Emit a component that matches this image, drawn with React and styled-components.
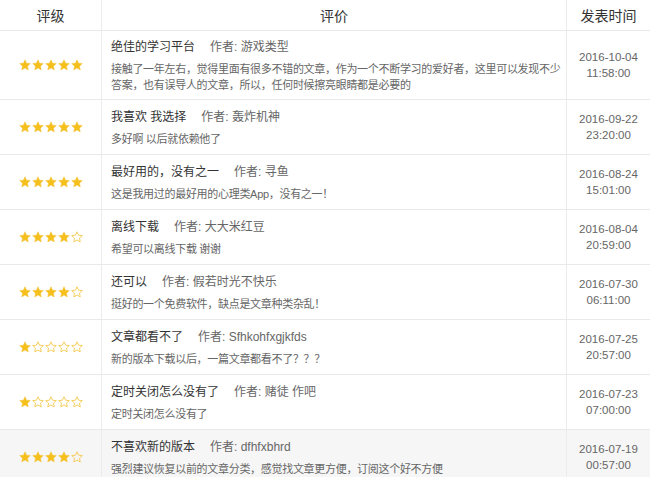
import React from "react";
import styled, { createGlobalStyle } from "styled-components";

const GlobalStyle = createGlobalStyle`
	html, body {
		margin: 0;
		padding: 0;
		background: #fff;
		overflow: hidden;
	}
	body {
		font-family: "Liberation Sans", "Noto Sans CJK SC", sans-serif;
		color: #333;
	}
`;

const Table = styled.div`
	width: 650px;
	display: grid;
	grid-template-columns: 102px 465px 1fr;
`;

const HeadCell = styled.div`
	height: 30px;
	display: flex;
	align-items: center;
	justify-content: center;
	font-size: 14px;
	color: #333;
	border-bottom: 1px solid #e9e9e9;
	border-right: ${(p) => (p.$last ? "none" : "1px solid #ececec")};
`;

const Cell = styled.div`
	min-height: 55px;
	box-sizing: border-box;
	display: flex;
	flex-direction: column;
	justify-content: center;
	align-items: ${(p) => p.$align || "stretch"};
	padding: ${(p) => p.$pad || "6px 0"};
	background: ${(p) => (p.$shade ? "#f6f6f6" : "#fff")};
	border-bottom: 1px solid #e9e9e9;
	border-right: ${(p) => (p.$last ? "none" : "1px solid #ececec")};
`;

const Stars = styled.div`
	display: flex;
	gap: 1px;
`;

const TitleLine = styled.div`
	font-size: 12px;
	line-height: 20px;
	margin-bottom: 4px;
	white-space: nowrap;
`;

const Title = styled.span`
	color: #333;
	margin-right: 15px;
`;

const Author = styled.span`
	color: #666;
`;

const Comment = styled.div`
	font-size: 11px;
	letter-spacing: -0.3px;
	line-height: 16px;
	color: #666;
`;

const DateText = styled.div`
	font-size: 11.5px;
	line-height: 16px;
	color: #666;
	text-align: center;
`;

function Star({ filled }) {
	return (
		<svg width="12" height="12" viewBox="0 0 24 24">
			<polygon
				points="12,1.5 15.1,8.4 22.6,9.2 17,14.3 18.5,21.8 12,18 5.5,21.8 7,14.3 1.4,9.2 8.9,8.4"
				fill={filled ? "#f6c01c" : "none"}
				stroke="#f3c33a"
				strokeWidth={filled ? 1 : 1.6}
				strokeLinejoin="round"
			/>
		</svg>
	);
}

const reviews = [
	{
		rate: 5,
		title: "绝佳的学习平台",
		author: "游戏类型",
		text: "接触了一年左右，觉得里面有很多不错的文章，作为一个不断学习的爱好者，这里可以发现不少答案，也有误导人的文章，所以，任何时候擦亮眼睛都是必要的",
		date: "2016-10-04",
		time: "11:58:00",
	},
	{
		rate: 5,
		title: "我喜欢 我选择",
		author: "轰炸机神",
		text: "多好啊 以后就依赖他了",
		date: "2016-09-22",
		time: "23:20:00",
	},
	{
		rate: 5,
		title: "最好用的，没有之一",
		author: "寻鱼",
		text: "这是我用过的最好用的心理类App，没有之一！",
		date: "2016-08-24",
		time: "15:01:00",
	},
	{
		rate: 4,
		title: "离线下载",
		author: "大大米红豆",
		text: "希望可以离线下载 谢谢",
		date: "2016-08-04",
		time: "20:59:00",
	},
	{
		rate: 4,
		title: "还可以",
		author: "假若时光不快乐",
		text: "挺好的一个免费软件，缺点是文章种类杂乱！",
		date: "2016-07-30",
		time: "06:11:00",
	},
	{
		rate: 1,
		title: "文章都看不了",
		author: "Sfhkohfxgjkfds",
		text: "新的版本下载以后，一篇文章都看不了？？？",
		date: "2016-07-25",
		time: "20:57:00",
	},
	{
		rate: 1,
		title: "定时关闭怎么没有了",
		author: "赌徒 作吧",
		text: "定时关闭怎么没有了",
		date: "2016-07-23",
		time: "07:00:00",
	},
	{
		rate: 4,
		title: "不喜欢新的版本",
		author: "dfhfxbhrd",
		text: "强烈建议恢复以前的文章分类，感觉找文章更方便，订阅这个好不方便",
		date: "2016-07-19",
		time: "00:57:00",
	},
];

export default function App() {
	return (
		<>
			<GlobalStyle />
			<Table>
				<HeadCell>评级</HeadCell>
				<HeadCell>评价</HeadCell>
				<HeadCell $last>发表时间</HeadCell>
				{reviews.map((r, i) => {
					const shade = i === reviews.length - 1;
					return (
						<React.Fragment key={i}>
							<Cell $align="center" $shade={shade}>
								<Stars>
									{[0, 1, 2, 3, 4].map((n) => (
										<Star key={n} filled={n < r.rate} />
									))}
								</Stars>
							</Cell>
							<Cell $pad="6px 2px 6px 9px" $shade={shade}>
								<TitleLine>
									<Title>{r.title}</Title>
									<Author>作者: {r.author}</Author>
								</TitleLine>
								<Comment>{r.text}</Comment>
							</Cell>
							<Cell $align="center" $shade={shade} $last>
								<DateText>{r.date}</DateText>
								<DateText>{r.time}</DateText>
							</Cell>
						</React.Fragment>
					);
				})}
			</Table>
		</>
	);
}
